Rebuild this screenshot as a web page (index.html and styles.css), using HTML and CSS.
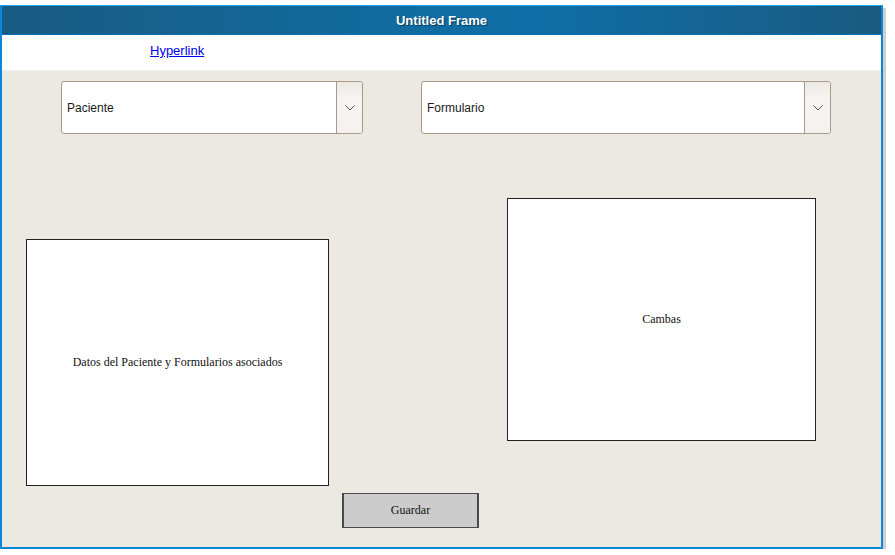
FILE: index.html
```html
<!DOCTYPE html>
<html>
<head>
<meta charset="utf-8">
<link rel="stylesheet" href="styles.css">
</head>
<body>
<div class="window">
  <div class="titlebar">Untitled Frame</div>
  <div class="linkbar"><a href="#" class="hyperlink">Hyperlink</a></div>
  <div class="content">
    <div class="selects">
      <div class="select select-paciente">
        <span class="select-label">Paciente</span>
        <span class="select-btn"><svg width="10" height="6" viewBox="0 0 10 6"><path d="M0.5 0.5 L5 5 L9.5 0.5" fill="none" stroke="#555" stroke-width="1"/></svg></span>
      </div>
      <div class="select select-form">
        <span class="select-label">Formulario</span>
        <span class="select-btn"><svg width="10" height="6" viewBox="0 0 10 6"><path d="M0.5 0.5 L5 5 L9.5 0.5" fill="none" stroke="#555" stroke-width="1"/></svg></span>
      </div>
    </div>
    <div class="panels">
      <div class="panel panel-datos">Datos del Paciente y Formularios asociados</div>
      <div class="panel panel-canvas">Cambas</div>
    </div>
    <div class="actions">
      <div class="btn">Guardar</div>
    </div>
  </div>
</div>
</body>
</html>
```

FILE: styles.css
```css
html, body {
  margin: 0;
  padding: 0;
  background: #ffffff;
}
body {
  padding-top: 5px;
  font-family: "Liberation Sans", Arial, sans-serif;
}
.window {
  width: 883px;
  height: 544px;
  box-sizing: border-box;
  border: 2px solid #0b86d8;
  border-top: 1px solid #22a6f5;
  box-shadow: 3px 3px 0 #cfcfcf;
  display: flex;
  flex-direction: column;
  background: #ece9e3;
}
.titlebar {
  height: 28px;
  flex: none;
  background: linear-gradient(to right, #195b82 0%, #116a9c 40%, #0f6ea8 60%, #195b80 100%);
  border-bottom: 1px solid #0a6fb5;
  color: #ffffff;
  font-weight: bold;
  font-size: 13px;
  display: flex;
  align-items: center;
  justify-content: center;
  text-shadow: 1px 1px 1px rgba(0,0,0,0.45);
}
.linkbar {
  height: 36px;
  flex: none;
  background: #ffffff;
  border-bottom: 1px solid #f2f0ec;
  padding-left: 148px;
  box-sizing: border-box;
  padding-top: 6px;
}
.hyperlink {
  color: #0000ee;
  font-size: 13px;
  text-decoration: underline;
}
.content {
  flex: 1;
  background: #ece9e3;
  display: flex;
  flex-direction: column;
}
.selects {
  display: flex;
  gap: 58px;
  padding-left: 59px;
  margin-top: 10px;
}
.select {
  height: 53px;
  box-sizing: border-box;
  border: 1px solid #a8998a;
  border-radius: 3px;
  background: #ffffff;
  display: flex;
  align-items: stretch;
  overflow: hidden;
}
.select-paciente { width: 302px; }
.select-form { width: 410px; }
.select-label {
  flex: 1;
  display: flex;
  align-items: center;
  padding-left: 5px;
  font-size: 12px;
  color: #1a1a1a;
}
.select-btn {
  width: 25px;
  border-left: 1px solid #a8998a;
  background: linear-gradient(to bottom, #ece9e3 0%, #f6f5f2 35%, #f3f1ed 100%);
  display: flex;
  align-items: center;
  justify-content: center;
}
.panels {
  display: flex;
  align-items: flex-start;
  padding-left: 24px;
  gap: 178px;
}
.panel {
  background: #ffffff;
  border: 1px solid #222222;
  box-sizing: border-box;
  display: flex;
  align-items: center;
  justify-content: center;
  font-family: "Liberation Serif", "Times New Roman", serif;
  font-size: 12px;
  color: #111111;
}
.panel-datos {
  width: 303px;
  height: 247px;
  margin-top: 105px;
}
.panel-canvas {
  width: 309px;
  height: 243px;
  margin-top: 64px;
}
.actions {
  padding-left: 340px;
  margin-top: 7px;
}
.btn {
  width: 137px;
  height: 35px;
  box-sizing: border-box;
  background: #cccccc;
  border: 1px solid #4a4a4a;
  border-left-width: 2px;
  border-right-width: 2px;
  display: flex;
  align-items: center;
  justify-content: center;
  font-family: "Liberation Serif", "Times New Roman", serif;
  font-size: 12px;
  color: #111111;
}
```
